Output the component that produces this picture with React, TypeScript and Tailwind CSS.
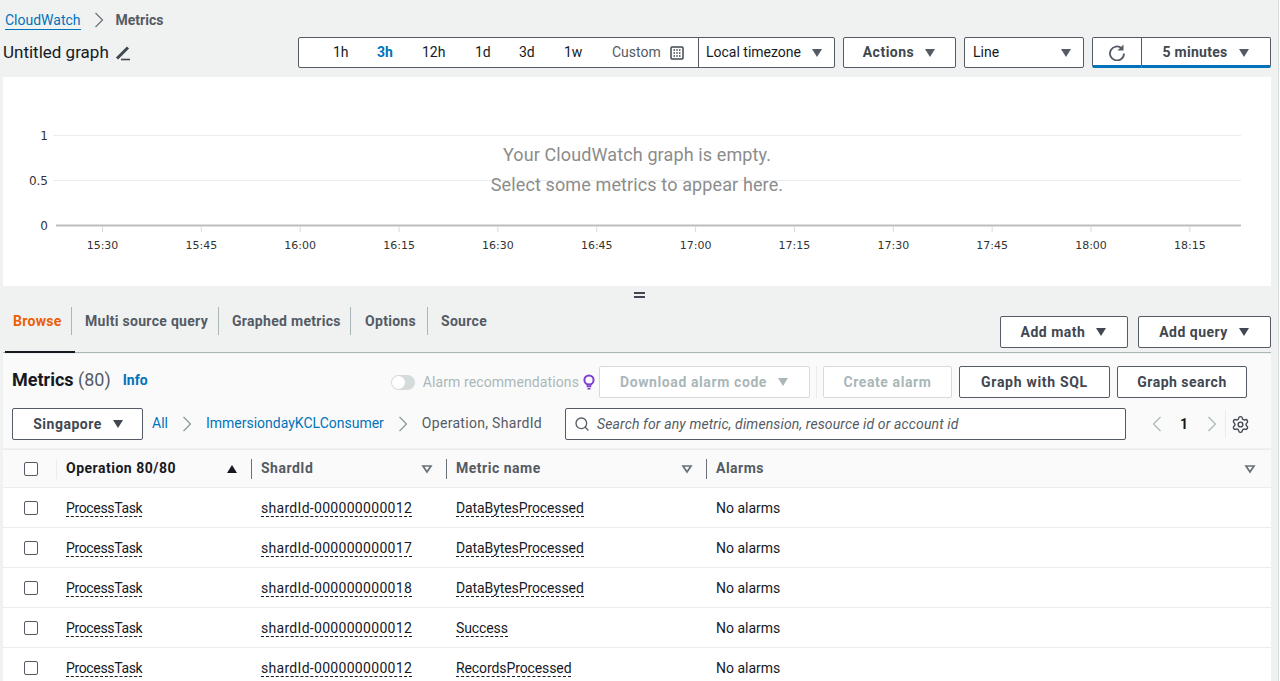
import { Search, Settings } from "lucide-react";

const hours = ["15:30", "15:45", "16:00", "16:15", "16:30", "16:45", "17:00", "17:15", "17:30", "17:45", "18:00", "18:15"];

const rows = [
  ["shardId-000000000012", "DataBytesProcessed"],
  ["shardId-000000000017", "DataBytesProcessed"],
  ["shardId-000000000018", "DataBytesProcessed"],
  ["shardId-000000000012", "Success"],
  ["shardId-000000000012", "RecordsProcessed"],
];

function Caret({ className = "", hollow = false }: { className?: string; hollow?: boolean }) {
  return (
    <svg width="12" height="10" viewBox="0 0 12 10" className={className}>
      {hollow ? (
        <path d="M2 2h8L6 8z" fill="none" stroke="currentColor" strokeWidth="1.7" />
      ) : (
        <path d="M1 1h10L6 9z" fill="currentColor" />
      )}
    </svg>
  );
}

function Chevron({ left = false, className = "" }: { left?: boolean; className?: string }) {
  return (
    <svg width="10" height="16" viewBox="0 0 10 16" className={className}>
      <path d={left ? "M8.5 1l-7 7 7 7" : "M1.5 1l7 7-7 7"} fill="none" stroke="currentColor" strokeWidth="1.2" />
    </svg>
  );
}

function Button({ children, className = "" }: { children: React.ReactNode; className?: string }) {
  return (
    <div className={`flex h-8 items-center justify-center rounded-[2px] border border-[#545b64] bg-white text-[14px] font-bold tracking-[0.5px] text-[#414750] ${className}`}>
      {children}
    </div>
  );
}

function Checkbox() {
  return <div className="h-[14px] w-[14px] rounded-[2px] border border-[#545b64] bg-white" />;
}

function Graph() {
  return (
    <div className="relative ml-[3px] mr-[7px] mt-[9px] h-[209px] bg-white">
      <svg width="1268" height="209" viewBox="0 0 1268 209" className="block">
        <g fill="none">
          <path d="M50 58.5H1238M50 103.5H1238" stroke="#eaeded" />
          <path d="M53 148.5H1238" stroke="#bdbdbd" strokeWidth="2" />
          {hours.map((h, i) => (
            <path key={h} d={`M${99.5 + i * 98.85} 149v6`} stroke="#d5dbdb" />
          ))}
        </g>
        <g fontFamily="'DejaVu Sans', sans-serif" fontSize="11" fill="#333">
          <text x="45" y="63" textAnchor="end" fontSize="12">1</text>
          <text x="45" y="108" textAnchor="end" fontSize="12">0.5</text>
          <text x="45" y="153" textAnchor="end" fontSize="12">0</text>
          {hours.map((h, i) => (
            <text key={h} x={99.5 + i * 98.85} y="172" textAnchor="middle">{h}</text>
          ))}
        </g>
      </svg>
      <div className="absolute inset-x-0 top-[63px] text-center text-[18px] leading-[30px] tracking-[0.12px] text-[#8c8c8c]">
        <p>Your CloudWatch graph is empty.</p>
        <p>Select some metrics to appear here.</p>
      </div>
    </div>
  );
}

export default function App() {
  return (
    <div className="h-[681px] w-[1279px] overflow-hidden border-r border-[#d5dbdb] bg-[#f0f2f2] font-['Roboto',sans-serif] text-[14px] text-[#16191f]">
      <nav className="flex h-[37px] items-start pl-[5px] pt-[11px]">
        <a className="border-b border-[#0073bb] leading-[18px] text-[#0073bb]">CloudWatch</a>
        <Chevron className="ml-[13px] mr-[12px] mt-[1px] text-[#687078]" />
        <span className="font-bold leading-[18px] text-[#545b64]">Metrics</span>
      </nav>

      <div className="flex h-[31px] items-center justify-between pl-[3px] pr-[7px]">
        <div className="flex items-center gap-[6px]">
          <h1 className="text-[17px]">Untitled graph</h1>
          <svg width="16" height="16" viewBox="0 0 16 16" className="text-[#414750]">
            <path d="M2 13.5L13 2.5" stroke="currentColor" strokeWidth="3" fill="none" />
            <path d="M6 14.5h9" stroke="currentColor" strokeWidth="1.6" fill="none" />
          </svg>
        </div>
        <div className="flex items-center gap-2">
          <div className="flex h-[31px] rounded-[2px] border border-[#545b64] bg-white">
            <div className="flex w-[399px] items-center pl-[34px] text-[#16191f]">
              <span className="w-[44px]">1h</span>
              <span className="w-[45px] font-bold text-[#0073bb]">3h</span>
              <span className="w-[53px]">12h</span>
              <span className="w-[44px]">1d</span>
              <span className="w-[45px]">3d</span>
              <span className="w-[48px]">1w</span>
              <span className="text-[#545b64]">Custom</span>
              <svg width="14" height="14" viewBox="0 0 14 14" className="ml-[9px] text-[#414750]">
                <rect x="1" y="1" width="12" height="12" rx="1" fill="none" stroke="currentColor" strokeWidth="1.5" />
                <path d="M3.5 4h7M3.5 7h7M3.5 10h7" stroke="currentColor" strokeWidth="1.6" strokeDasharray="1.5 1.25" />
              </svg>
            </div>
            <div className="flex w-[136px] items-center justify-between border-l border-[#545b64] pl-[7px] pr-[11px]">
              <span>Local timezone</span>
              <Caret className="text-[#545b64]" />
            </div>
          </div>
          <Button className="h-[31px] w-[113px] gap-[10px]">Actions <Caret className="text-[#545b64]" /></Button>
          <div className="flex h-[31px] w-[120px] items-center justify-between rounded-[2px] border border-[#545b64] bg-white pl-2 pr-[11px]">
            <span>Line</span>
            <Caret className="text-[#545b64]" />
          </div>
          <div className="flex h-[31px]">
            <div className="flex w-[50px] items-center justify-center rounded-l-[2px] border border-b-[3px] border-[#545b64] border-b-[#0073bb] bg-white">
              <svg width="18" height="18" viewBox="0 0 18 18" className="text-[#545b64]">
                <path d="M13.6 5.2A7 7 0 1 0 16 10.5" fill="none" stroke="currentColor" strokeWidth="1.8" />
                <path d="M15.5 1.5v6h-6z" fill="currentColor" />
              </svg>
            </div>
            <div className="flex w-[129px] items-center justify-center gap-[10px] rounded-r-[2px] border border-b-[3px] border-l-0 border-[#545b64] border-b-[#0073bb] bg-white pt-[2px] font-bold tracking-[0.3px] text-[#414750]">
              5 minutes <Caret className="text-[#545b64]" />
            </div>
          </div>
        </div>
      </div>

      <Graph />

      <div className="flex h-[18px] items-center justify-center">
        <div className="h-[6px] w-[11px] border-y-2 border-[#414750]" />
      </div>

      <div className="relative ml-[3px] mr-[7px] flex h-[49px] items-start border-b border-[#aab7b8] pt-[3px] font-bold tracking-[0.3px] text-[#545b64]">
        <div className="absolute bottom-[-1px] left-[2px] h-[2px] w-[70px] bg-[#16191f]" />
        <span className="w-[69px] border-r border-[#aab7b8] pl-[10px] leading-[28px] text-[#eb5f07]">Browse</span>
        <span className="w-[147px] border-r border-[#aab7b8] pl-[13px] leading-[28px]">Multi source query</span>
        <span className="w-[132px] border-r border-[#aab7b8] pl-[13px] leading-[28px]">Graphed metrics</span>
        <span className="w-[77px] border-r border-[#aab7b8] pl-[14px] leading-[28px]">Options</span>
        <span className="pl-[13px] leading-[28px]">Source</span>
        <div className="ml-auto mt-[9px] flex gap-[10px]">
          <Button className="w-[128px] gap-[10px]">Add math <Caret /></Button>
          <Button className="w-[133px] gap-[10px]">Add query <Caret /></Button>
        </div>
      </div>

      <section className="ml-[3px] mr-[7px] mt-px h-[94px] bg-[#fafafa]">
        <div className="flex h-[54px] items-center pl-[9px] pr-[24px] pt-[2px]">
          <h2 className="-mt-[6px] text-[18px] font-bold">Metrics <span className="font-normal text-[#545b64]">(80)</span></h2>
          <a className="-mt-[4px] ml-[12px] font-bold text-[#0073bb]">Info</a>
          <div className="ml-auto flex items-center">
            <div className="relative mr-[8px] h-[15px] w-[24px] rounded-full bg-[#d5dbdb]">
              <div className="absolute left-[1px] top-[1px] h-[13px] w-[13px] rounded-full bg-white" />
            </div>
            <span className="tracking-[0.1px] text-[#aab7b8]">Alarm recommendations</span>
            <svg width="14" height="16" viewBox="0 0 14 16" className="ml-[3px] text-[#7d3fd1]">
              <circle cx="7" cy="6" r="4.6" fill="none" stroke="currentColor" strokeWidth="2" />
              <path d="M5.5 10v2.5h3V10M5.5 14.8h3" fill="none" stroke="currentColor" strokeWidth="1.6" />
            </svg>
            <div className="ml-[3px] flex h-8 w-[211px] items-center justify-center gap-[10px] rounded-[2px] border border-[#d5dbdb] bg-white font-bold tracking-[0.6px] text-[#aab7b8]">
              Download alarm code <Caret />
            </div>
            <div className="mx-[6px] h-[32px] border-l border-[#eaeded]" />
            <div className="flex h-8 w-[129px] items-center justify-center rounded-[2px] border border-[#d5dbdb] bg-white font-bold tracking-[0.6px] text-[#aab7b8]">
              Create alarm
            </div>
            <Button className="ml-[7px] w-[151px] tracking-[0.7px]">Graph with SQL</Button>
            <Button className="ml-[7px] w-[130px]">Graph search</Button>
          </div>
        </div>
        <div className="flex h-[32px] items-center pl-[9px]">
          <Button className="w-[131px] gap-[10px] pl-[2px]">Singapore <Caret /></Button>
          <a className="-mt-px ml-[9px] text-[#0073bb]">All</a>
          <Chevron className="mx-[14px] text-[#879596]" />
          <a className="-mt-px text-[#0073bb]">ImmersiondayKCLConsumer</a>
          <Chevron className="mx-[14px] text-[#879596]" />
          <span className="-mt-px tracking-[0.3px] text-[#545b64]">Operation, ShardId</span>
          <div className="ml-[23px] flex h-8 w-[561px] items-center gap-[7px] rounded-[2px] border border-[#545b64] bg-white pl-2 italic tracking-[0.13px] text-[#545b64]">
            <Search className="h-[16px] w-[16px] text-[#545b64]" strokeWidth={2} />
            Search for any metric, dimension, resource id or account id
          </div>
          <Chevron left className="ml-[26px] text-[#aab7b8]" />
          <span className="ml-[18px] font-bold">1</span>
          <Chevron className="ml-[19px] text-[#aab7b8]" />
          <div className="ml-[8px] h-[28px] border-l border-[#eaeded]" />
          <Settings className="ml-[5px] h-[19px] w-[19px] text-[#414750]" strokeWidth={1.8} />
        </div>
      </section>

      <div className="ml-[3px] mr-[7px] mt-px bg-white">
        <div className="grid h-[39px] grid-cols-[54px_195px_195px_260px_1fr] items-center border-y border-[#eaeded] bg-[#fafafa] font-bold tracking-[0.5px] text-[#545b64]">
          <div className="flex h-[20px] items-center border-r border-[#eaeded] pl-[21px]"><Checkbox /></div>
          <div className="flex h-[20px] items-center justify-between border-r border-[#687078] pl-[9px] pr-[13px] text-[#16191f]">
            Operation 80/80 <Caret className="rotate-180 text-[#16191f]" />
          </div>
          <div className="flex h-[20px] items-center justify-between border-r border-[#687078] pl-[9px] pr-[13px]">
            ShardId <Caret hollow className="text-[#687078]" />
          </div>
          <div className="flex h-[20px] items-center justify-between border-r border-[#687078] pl-[9px] pr-[13px]">
            Metric name <Caret hollow className="text-[#687078]" />
          </div>
          <div className="flex h-[20px] items-center justify-between pl-[9px] pr-[15px]">
            Alarms <Caret hollow className="text-[#687078]" />
          </div>
        </div>
        {rows.map(([shard, metric], i) => (
          <div key={i} className="grid h-10 grid-cols-[54px_195px_195px_260px_1fr] items-center border-b border-[#eaeded] pt-px">
            <div className="pl-[21px]"><Checkbox /></div>
            <div className="pl-[9px]"><span className="border-b border-dashed border-[#16191f] tracking-[-0.35px]">ProcessTask</span></div>
            <div className="pl-[9px]"><span className="border-b border-dashed border-[#16191f] tracking-[0.3px]">{shard}</span></div>
            <div className="pl-[9px]"><span className="border-b border-dashed border-[#16191f] tracking-[-0.1px]">{metric}</span></div>
            <div className="pl-[9px]">No alarms</div>
          </div>
        ))}
      </div>
    </div>
  );
}
